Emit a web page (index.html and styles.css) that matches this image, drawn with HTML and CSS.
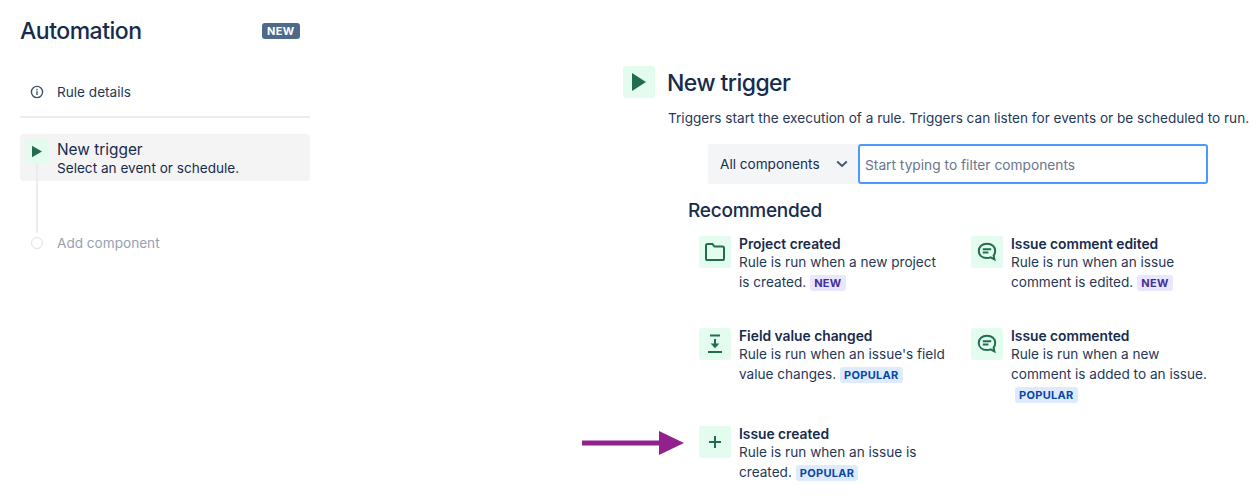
FILE: index.html
```html
<!DOCTYPE html>
<html lang="en">
<head>
    <meta charset="UTF-8">
    <title>Automation</title>
    <link rel="stylesheet" href="styles.css">
</head>
<body>
    <div class="sidebar">
        <div class="brand">
            <h1>Automation</h1>
            <span class="lozenge lozenge-bold">NEW</span>
        </div>
        <div class="details">
            <svg class="info" width="14" height="14" viewBox="0 0 14 14">
                <circle cx="7" cy="7" r="5.6" fill="none" stroke="#42526e" stroke-width="1.4"/>
                <rect x="6.3" y="6.2" width="1.4" height="3.8" fill="#42526e"/>
                <rect x="6.3" y="3.9" width="1.4" height="1.4" fill="#42526e"/>
            </svg>
            <span>Rule details</span>
        </div>
        <div class="step-list">
            <div class="step-active">
                <div class="step-icon">
                    <svg width="12" height="13" viewBox="0 0 12 13"><path d="M1 .8 L11 6.5 L1 12.2 Z" fill="#216e4e"/></svg>
                </div>
                <div class="step-text">
                    <div class="step-title">New trigger</div>
                    <div class="step-sub">Select an event or schedule.</div>
                </div>
            </div>
            <div class="step-line"></div>
            <div class="step-add">
                <span class="dot"></span>
                <span>Add component</span>
            </div>
        </div>
    </div>

    <div class="main">
        <div class="main-head">
            <div class="icon-box big">
                <svg width="16" height="20" viewBox="0 0 16 20"><path d="M1 1 L15 10 L1 19 Z" fill="#216e4e"/></svg>
            </div>
            <h2>New trigger</h2>
        </div>
        <p class="intro">Triggers start the execution of a rule. Triggers can listen for events or be scheduled to run.</p>
        <div class="filter">
            <div class="select">
                <span>All components</span>
                <svg width="12" height="8" viewBox="0 0 12 8"><path d="M1.2 1.5 L6 6 L10.8 1.5" fill="none" stroke="#42526e" stroke-width="1.8"/></svg>
            </div>
            <input class="search" type="text" placeholder="Start typing to filter components">
        </div>
        <h3>Recommended</h3>
        <div class="cards">
            <div class="card row-a">
                <div class="icon-box">
                    <svg width="22" height="20" viewBox="0 0 22 20"><path d="M2 3.6 Q2 2 3.6 2 H8.4 L10.6 4.6 H18.4 Q20 4.6 20 6.2 V16.4 Q20 18 18.4 18 H3.6 Q2 18 2 16.4 Z" fill="none" stroke="#216e4e" stroke-width="2"/></svg>
                </div>
                <div class="card-text">
                    <div class="card-title">Project created</div>
                    Rule is run when a new project is created.<span class="lozenge lozenge-new">NEW</span>
                </div>
            </div>
            <div class="card row-a">
                <div class="icon-box">
                    <svg width="20" height="20" viewBox="0 0 20 20">
                        <path d="M10 1.8 C5 1.8 1.8 4.8 1.8 9 C1.8 13.2 5 16 10 16 C11.4 16 12.6 15.8 13.6 15.4 L17.4 17.4 L16.6 13.6 C17.6 12.4 18.2 10.8 18.2 9 C18.2 4.8 15 1.8 10 1.8 Z" fill="none" stroke="#216e4e" stroke-width="2"/>
                        <path d="M5.8 7.2 H14.2 M5.8 10.6 H11.4" fill="none" stroke="#216e4e" stroke-width="2"/>
                    </svg>
                </div>
                <div class="card-text">
                    <div class="card-title">Issue comment edited</div>
                    Rule is run when an issue comment is edited.<span class="lozenge lozenge-new">NEW</span>
                </div>
            </div>
            <div class="card row-b">
                <div class="icon-box">
                    <svg width="16" height="20" viewBox="0 0 16 20">
                        <path d="M3 1.5 H13 M1 18 H15" stroke="#216e4e" stroke-width="2"/>
                        <path d="M8 5 V10" stroke="#216e4e" stroke-width="2"/>
                        <path d="M3.6 9.6 H12.4 L8 14.2 Z" fill="#216e4e"/>
                    </svg>
                </div>
                <div class="card-text">
                    <div class="card-title">Field value changed</div>
                    Rule is run when an issue's field value changes.<span class="lozenge lozenge-popular">POPULAR</span>
                </div>
            </div>
            <div class="card row-b">
                <div class="icon-box">
                    <svg width="20" height="20" viewBox="0 0 20 20">
                        <path d="M10 1.8 C5 1.8 1.8 4.8 1.8 9 C1.8 13.2 5 16 10 16 C11.4 16 12.6 15.8 13.6 15.4 L17.4 17.4 L16.6 13.6 C17.6 12.4 18.2 10.8 18.2 9 C18.2 4.8 15 1.8 10 1.8 Z" fill="none" stroke="#216e4e" stroke-width="2"/>
                        <path d="M5.8 7.2 H14.2 M5.8 10.6 H11.4" fill="none" stroke="#216e4e" stroke-width="2"/>
                    </svg>
                </div>
                <div class="card-text">
                    <div class="card-title">Issue commented</div>
                    Rule is run when a new comment is added to an issue.<span class="lozenge lozenge-popular">POPULAR</span>
                </div>
            </div>
            <div class="card">
                <svg class="arrow" width="102" height="24" viewBox="0 0 102 24"><path d="M0 9.5 H77 V0 L102 12 L77 24 V14.5 H0 Z" fill="#93208f"/></svg>
                <div class="icon-box">
                    <svg width="14" height="14" viewBox="0 0 14 14"><path d="M7 1 V13 M1 7 H13" stroke="#216e4e" stroke-width="2"/></svg>
                </div>
                <div class="card-text">
                    <div class="card-title">Issue created</div>
                    Rule is run when an issue is created.<span class="lozenge lozenge-popular">POPULAR</span>
                </div>
            </div>
        </div>
    </div>
</body>
</html>
```

FILE: styles.css
```css
* {
    box-sizing: border-box;
}
body {
    margin: 0;
    height: 503px;
    overflow: hidden;
    display: flex;
    font-family: Inter, sans-serif;
    font-size: 13.6px;
    color: #172b4d;
    background: #fff;
}
.sidebar {
    width: 290px;
    margin-left: 20px;
    flex-shrink: 0;
}
.brand {
    height: 30px;
    margin-top: 16px;
    display: flex;
    align-items: center;
    justify-content: space-between;
    padding-right: 10px;
}
h1 {
    margin: 0;
    font-size: 23px;
    font-weight: 500;
    letter-spacing: -0.5px;
}
.lozenge {
    display: inline-block;
    font-size: 11px;
    font-weight: 700;
    line-height: 16px;
    padding: 0 4px;
    margin-left: 4px;
    border-radius: 3px;
    letter-spacing: 0.3px;
}
.lozenge-bold {
    background: #4d6a8b;
    color: #fff;
    padding: 0 5.5px;
    margin-left: 0;
}
.lozenge-new {
    background: #eae6ff;
    color: #403294;
}
.lozenge-popular {
    background: #deebff;
    color: #0747a6;
}
.details {
    height: 72px;
    padding: 22px 0 0 10px;
    display: flex;
    align-items: center;
    gap: 13px;
    border-bottom: 2px solid #ebecf0;
    color: #253858;
}
.info {
    flex-shrink: 0;
}
.step-list {
    margin-top: 16px;
}
.step-active {
    height: 47px;
    background: #f4f4f5;
    border-radius: 4px;
    display: flex;
    padding-left: 5px;
    padding-top: 5px;
    gap: 8px;
}
.step-icon {
    width: 24px;
    height: 24px;
    background: #e3fcef;
    border-radius: 3px;
    display: flex;
    align-items: center;
    justify-content: center;
    flex-shrink: 0;
}
.step-text {
    padding-top: 1px;
}
.step-title {
    font-size: 15.4px;
    line-height: 20px;
}
.step-sub {
    line-height: 17px;
}
.step-line {
    width: 2px;
    height: 70px;
    margin-left: 16px;
    background: #ebecf0;
    margin-top: -18px;
    position: relative;
}
.step-add {
    display: flex;
    align-items: center;
    gap: 14px;
    padding-left: 11px;
    height: 20px;
    color: #97a0af;
}
.dot {
    width: 12px;
    height: 12px;
    border: 1px solid #dfe1e6;
    border-radius: 50%;
    background: #fff;
}
.main {
    margin-left: 313px;
    padding-top: 66px;
    width: 634px;
    flex-shrink: 0;
}
.main-head {
    display: flex;
    align-items: center;
    gap: 12px;
    height: 32px;
}
.icon-box {
    width: 32px;
    height: 32px;
    background: #e3fcef;
    border-radius: 3px;
    display: flex;
    align-items: center;
    justify-content: center;
    flex-shrink: 0;
}
h2 {
    margin: 2px 0 0;
    font-size: 23px;
    font-weight: 500;
    letter-spacing: -0.55px;
}
.intro {
    margin: 10px 0 0 45px;
    line-height: 20px;
    white-space: nowrap;
    color: #253858;
}
.filter {
    margin: 16px 0 0 85px;
    display: flex;
    height: 40px;
}
.select {
    width: 150px;
    background: #f4f5f7;
    border-radius: 3px 0 0 3px;
    display: flex;
    align-items: center;
    justify-content: space-between;
    padding: 0 10px 0 12px;
}
.search {
    width: 350px;
    height: 40px;
    border: 2px solid #4c9aff;
    border-radius: 3px;
    padding: 2px 5px 0;
    font-family: inherit;
    font-size: 13.75px;
    outline: none;
}
.search::placeholder {
    color: #6b778c;
    opacity: 1;
}
h3 {
    margin: 15px 0 0 65px;
    font-size: 19px;
    font-weight: 500;
    line-height: 24px;
    letter-spacing: -0.25px;
}
.cards {
    margin: 13px 0 0 76px;
    display: grid;
    grid-template-columns: 272px 272px;
}
.card {
    position: relative;
    display: flex;
    gap: 8px;
}
.row-a {
    height: 92px;
}
.row-b {
    height: 98px;
}
.card-text {
    width: 206px;
    line-height: 20px;
    margin-top: -1px;
    color: #253858;
}
.card-title {
    font-size: 13.8px;
    font-weight: 600;
    line-height: 16px;
    margin-top: 1px;
    color: #172b4d;
}
.arrow {
    position: absolute;
    left: -117px;
    top: 5px;
}
```
